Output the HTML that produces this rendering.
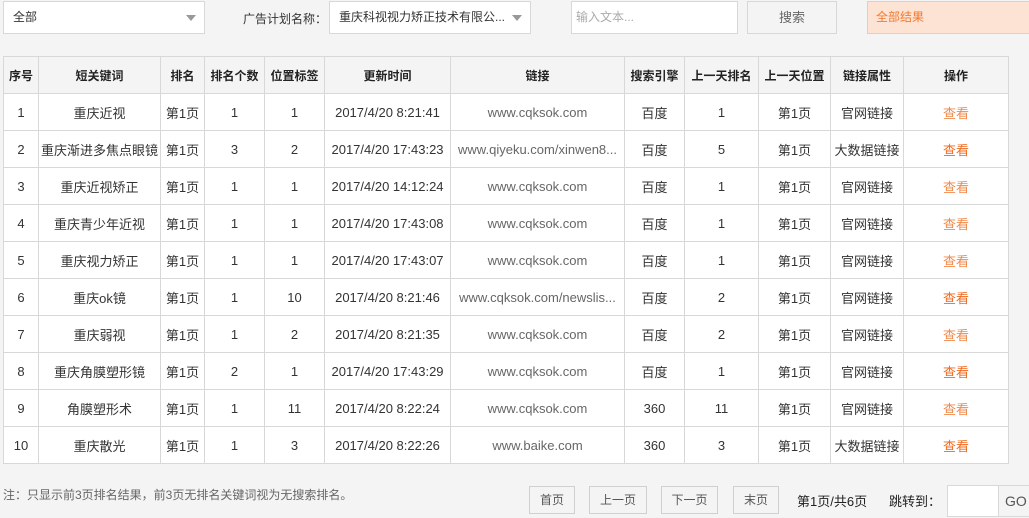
<!DOCTYPE html>
<html><head><meta charset="utf-8">
<style>
*{box-sizing:border-box;margin:0;padding:0}
body{width:1029px;height:518px;background:#f4f4f4;font-family:"Liberation Sans","Noto Sans CJK SC",sans-serif;font-size:12px;color:#333;position:relative;overflow:hidden}
.a{position:absolute}
.box{background:#fff;border:1px solid #d8d8d8}
.sel{line-height:31px;padding-left:9px;font-size:12px;color:#333}
.tri{position:absolute;right:8px;top:13px;width:0;height:0;border-left:5px solid transparent;border-right:5px solid transparent;border-top:6px solid #999}
table{position:absolute;left:3px;top:56px;border-collapse:collapse;background:#fff;table-layout:fixed}
td,th{border:1px solid #d8d8d8;text-align:center;height:37px;font-size:12px;white-space:nowrap;overflow:hidden;padding:0 2px}
td{font-size:13px}
th{background:#f4f4f4;font-weight:bold;color:#222}
td.l{color:#666}
.o1{color:#f08a4b}.o2{color:#f06a20}
.pb{position:absolute;top:486px;height:28px;border:1px solid #d0d0d0;background:#f4f4f4;line-height:26px;text-align:center;color:#555;font-size:12px}
</style></head><body>
<div class="a box sel" style="left:3px;top:1px;width:202px;height:33px">全部<span class="tri"></span></div>
<div class="a" style="left:243px;top:10px;font-size:12px">广告计划名称：</div>
<div class="a box sel" style="left:329px;top:1px;width:202px;height:33px">重庆科视视力矫正技术有限公...<span class="tri"></span></div>
<div class="a box" style="left:571px;top:1px;width:167px;height:33px;line-height:31px;padding-left:4px;color:#aaa">输入文本...</div>
<div class="a" style="left:747px;top:1px;width:90px;height:33px;border:1px solid #d8d8d8;background:#f4f4f4;text-align:center;line-height:31px;font-size:13px;color:#666">搜索</div>
<div class="a" style="left:867px;top:1px;width:170px;height:33px;border:1px solid #f4c9b0;background:#fde3d4;line-height:31px;padding-left:8px;color:#f07a30">全部结果</div>
<table>
<colgroup><col style="width:35px"><col style="width:122px"><col style="width:44px"><col style="width:60px"><col style="width:60px"><col style="width:126px"><col style="width:174px"><col style="width:60px"><col style="width:74px"><col style="width:72px"><col style="width:73px"><col style="width:105px"></colgroup>
<tr><th>序号</th><th>短关键词</th><th>排名</th><th>排名个数</th><th>位置标签</th><th>更新时间</th><th>链接</th><th>搜索引擎</th><th>上一天排名</th><th>上一天位置</th><th>链接属性</th><th>操作</th></tr>
<tr><td>1</td><td>重庆近视</td><td>第1页</td><td>1</td><td>1</td><td>2017/4/20 8:21:41</td><td class="l">www.cqksok.com</td><td>百度</td><td>1</td><td>第1页</td><td>官网链接</td><td class="o1">查看</td></tr>
<tr><td>2</td><td>重庆渐进多焦点眼镜</td><td>第1页</td><td>3</td><td>2</td><td>2017/4/20 17:43:23</td><td class="l">www.qiyeku.com/xinwen8...</td><td>百度</td><td>5</td><td>第1页</td><td>大数据链接</td><td class="o2">查看</td></tr>
<tr><td>3</td><td>重庆近视矫正</td><td>第1页</td><td>1</td><td>1</td><td>2017/4/20 14:12:24</td><td class="l">www.cqksok.com</td><td>百度</td><td>1</td><td>第1页</td><td>官网链接</td><td class="o1">查看</td></tr>
<tr><td>4</td><td>重庆青少年近视</td><td>第1页</td><td>1</td><td>1</td><td>2017/4/20 17:43:08</td><td class="l">www.cqksok.com</td><td>百度</td><td>1</td><td>第1页</td><td>官网链接</td><td class="o1">查看</td></tr>
<tr><td>5</td><td>重庆视力矫正</td><td>第1页</td><td>1</td><td>1</td><td>2017/4/20 17:43:07</td><td class="l">www.cqksok.com</td><td>百度</td><td>1</td><td>第1页</td><td>官网链接</td><td class="o1">查看</td></tr>
<tr><td>6</td><td>重庆ok镜</td><td>第1页</td><td>1</td><td>10</td><td>2017/4/20 8:21:46</td><td class="l">www.cqksok.com/newslis...</td><td>百度</td><td>2</td><td>第1页</td><td>官网链接</td><td class="o2">查看</td></tr>
<tr><td>7</td><td>重庆弱视</td><td>第1页</td><td>1</td><td>2</td><td>2017/4/20 8:21:35</td><td class="l">www.cqksok.com</td><td>百度</td><td>2</td><td>第1页</td><td>官网链接</td><td class="o1">查看</td></tr>
<tr><td>8</td><td>重庆角膜塑形镜</td><td>第1页</td><td>2</td><td>1</td><td>2017/4/20 17:43:29</td><td class="l">www.cqksok.com</td><td>百度</td><td>1</td><td>第1页</td><td>官网链接</td><td class="o2">查看</td></tr>
<tr><td>9</td><td>角膜塑形术</td><td>第1页</td><td>1</td><td>11</td><td>2017/4/20 8:22:24</td><td class="l">www.cqksok.com</td><td>360</td><td>11</td><td>第1页</td><td>官网链接</td><td class="o1">查看</td></tr>
<tr><td>10</td><td>重庆散光</td><td>第1页</td><td>1</td><td>3</td><td>2017/4/20 8:22:26</td><td class="l">www.baike.com</td><td>360</td><td>3</td><td>第1页</td><td>大数据链接</td><td class="o2">查看</td></tr>
</table>
<div class="a" style="left:3px;top:486px;color:#666;font-size:12px">注：只显示前3页排名结果，前3页无排名关键词视为无搜索排名。</div>
<div class="pb" style="left:529px;width:46px">首页</div>
<div class="pb" style="left:589px;width:58px">上一页</div>
<div class="pb" style="left:661px;width:57px">下一页</div>
<div class="pb" style="left:733px;width:46px">末页</div>
<div class="a" style="left:797px;top:491px;font-size:13px;color:#222">第1页/共6页</div>
<div class="a" style="left:889px;top:491px;font-size:13px;color:#222">跳转到：</div>
<div class="a box" style="left:947px;top:485px;width:52px;height:32px"></div>
<div class="a" style="left:998px;top:485px;width:40px;height:32px;border:1px solid #d8d8d8;background:#f4f4f4;line-height:30px;padding-left:6px;font-size:14px;color:#555">GO</div>
</body></html>
